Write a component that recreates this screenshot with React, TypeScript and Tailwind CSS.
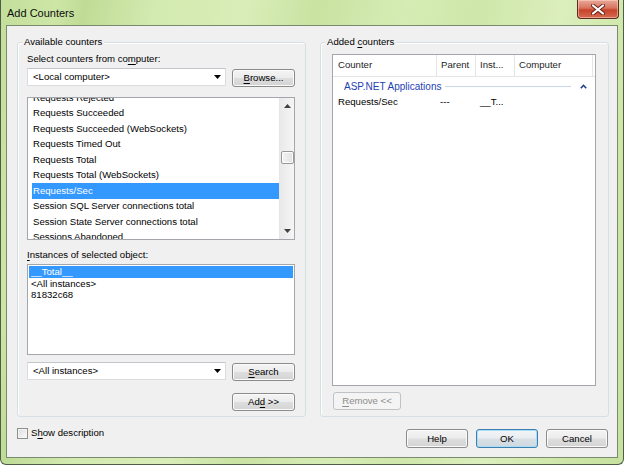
import React from "react";

const UI = "font-['Liberation_Sans',Arial,sans-serif] text-[9.6px] text-black";

function Btn({
  children,
  className = "",
  kind = "normal",
}: {
  children: React.ReactNode;
  className?: string;
  kind?: "normal" | "default" | "disabled";
}) {
  const look =
    kind === "default"
      ? "border-[#3c7fb1] bg-[linear-gradient(#f3f5f7,#e8edf1_48%,#d8e0e6_52%,#d0d9e0)] shadow-[inset_0_0_0_1px_#a9ddf7]"
      : kind === "disabled"
      ? "border-[#bfc3c6] bg-[#f4f4f4] text-[#8d8d8d]"
      : "border-[#8b8b8b] bg-[linear-gradient(#f4f4f4,#ececec_48%,#dedede_52%,#d3d3d3)] shadow-[inset_0_0_0_1px_#fbfbfb]";
  return (
    <div
      className={`flex shrink-0 items-center justify-center rounded-[3px] border leading-none ${look} ${className}`}
    >
      {children}
    </div>
  );
}

function DropArrow() {
  return (
    <svg width="7" height="4" viewBox="0 0 7 4" className="shrink-0">
      <path d="M0 0H7L3.5 4Z" fill="#000" />
    </svg>
  );
}

function Combo({ text, className = "" }: { text: string; className?: string }) {
  return (
    <div
      className={`flex h-[18px] items-center justify-between border border-[#dadde0] border-t-[#c3c6ca] bg-white pl-[5px] pr-[4px] ${className}`}
    >
      <span className="leading-none">{text}</span>
      <DropArrow />
    </div>
  );
}

function GroupBox({
  label,
  className = "",
  children,
}: {
  label: React.ReactNode;
  className?: string;
  children: React.ReactNode;
}) {
  return (
    <div
      className={`relative h-[375px] w-[289px] rounded-[3px] border border-[#d5dfe5] shadow-[inset_1px_1px_0_#ffffff] ${className}`}
    >
      <div className="absolute -top-[9px] left-[4px] bg-[#f0f0f0] px-[2px] leading-[16px]">
        {label}
      </div>
      {children}
    </div>
  );
}

function VScroll() {
  return (
    <div className="flex w-[15px] shrink-0 flex-col items-center border-l border-[#e6e6e6] bg-[linear-gradient(90deg,#e9e9e9,#f5f5f5)]">
      <div className="flex h-[16px] items-center justify-center">
        <svg width="7" height="4" viewBox="0 0 7 4">
          <path d="M3.5 0L7 4H0Z" fill="#404040" />
        </svg>
      </div>
      <div className="mt-[37px] h-[13px] w-[13px] rounded-[2px] border border-[#979797] bg-[linear-gradient(90deg,#f3f3f3,#e2e2e2)] shadow-[inset_0_0_0_1px_#fdfdfd]" />
      <div className="flex-1" />
      <div className="flex h-[16px] items-center justify-center">
        <svg width="7" height="4" viewBox="0 0 7 4">
          <path d="M0 0H7L3.5 4Z" fill="#404040" />
        </svg>
      </div>
    </div>
  );
}

const counters = [
  "Requests Rejected",
  "Requests Succeeded",
  "Requests Succeeded (WebSockets)",
  "Requests Timed Out",
  "Requests Total",
  "Requests Total (WebSockets)",
  "Requests/Sec",
  "Session SQL Server connections total",
  "Session State Server connections total",
  "Sessions Abandoned",
];

function CloseGlyph() {
  return (
    <svg width="14" height="11" viewBox="0 0 14 11">
      <path
        d="M2 1.5L12 9.5M12 1.5L2 9.5"
        stroke="#6a2418"
        strokeWidth="4"
        strokeLinecap="round"
      />
      <path
        d="M2 1.5L12 9.5M12 1.5L2 9.5"
        stroke="#ffffff"
        strokeWidth="2.2"
        strokeLinecap="round"
      />
    </svg>
  );
}

export default function App() {
  return (
    <div
      className={`${UI} flex h-[465px] w-[624px] flex-col overflow-hidden rounded-b-[6px] border-x border-b border-[#4f5d47] bg-[linear-gradient(100deg,#c3df9b_0%,#cde6a6_8%,#bfdc96_12%,#d3eab0_22%,#d9edb8_35%,#c9e3a2_45%,#d6ecb5_58%,#cfe7a9_68%,#dbeebd_80%,#cde6a7_92%,#c6e19f_100%)]`}
    >
      {/* title bar */}
      <div className="flex h-[25px] shrink-0 items-start justify-between">
        <div className="mt-[5px] pl-[6px] text-[11px] leading-[16px] text-[#0d0d0d]">
          Add Counters
        </div>
        <div className="mr-[4px] flex h-[19px] w-[42px] items-center justify-center rounded-b-[4px] border border-t-0 border-[#5b2c22] bg-[linear-gradient(#e9a99a,#d9735f_45%,#c7432b_55%,#d66b4f)] shadow-[inset_0_0_0_1px_rgba(255,220,200,0.5)]">
          <CloseGlyph />
        </div>
      </div>

      {/* client area */}
      <div className="ml-[5px] flex h-[433px] w-[612px] shrink-0 flex-col border border-[#7a8a6e] bg-[#f0f0f0]">
        <div className="mt-[16px] flex gap-[14px] pl-[10px]">
          {/* available counters */}
          <GroupBox label="Available counters">
            <div className="flex flex-col pl-[9px] pt-[8px]">
              <div className="leading-[16px]">
                Select counters from co<u className="underline-offset-2">m</u>puter:
              </div>
              <div className="mt-[1px] flex w-[268px] items-start gap-[6px]">
                <Combo text="<Local computer>" className="w-[199px]" />
                <Btn className="mt-[1px] h-[18px] w-[63px]">
                  <span>
                    <u className="underline-offset-2">B</u>rowse...
                  </span>
                </Btn>
              </div>
              <div className="mt-[10px] flex h-[143px] w-[268px] border border-[#a3a6aa] bg-white">
                <div className="flex-1 overflow-hidden pl-[4px]">
                  <div className="mt-[-8px] flex flex-col">
                    {counters.map((c) => (
                      <div
                        key={c}
                        className={`flex h-[15.5px] items-center whitespace-nowrap pl-[1px] ${
                          c === "Requests/Sec" ? "bg-[#3399ff] text-white" : ""
                        }`}
                      >
                        {c}
                      </div>
                    ))}
                  </div>
                </div>
                <VScroll />
              </div>
              <div className="mt-[7px] leading-[16px]">
                <u className="underline-offset-2">I</u>nstances of selected object:
              </div>
              <div className="mt-[1px] flex h-[91px] w-[268px] flex-col border border-[#a3a6aa] bg-white px-[1px] pt-[1px]">
                <div className="flex h-[12px] items-center bg-[#3399ff] pl-[2px] text-white">
                  __Total__
                </div>
                <div className="flex h-[12px] items-center pl-[2px]">&lt;All instances&gt;</div>
                <div className="flex h-[11px] items-center pl-[2px]">81832c68</div>
              </div>
              <div className="mt-[7px] flex w-[268px] items-start gap-[6px]">
                <Combo text="<All instances>" className="w-[199px]" />
                <Btn className="mt-[1px] h-[18px] w-[63px]">
                  <span>
                    <u className="underline-offset-2">S</u>earch
                  </span>
                </Btn>
              </div>
              <div className="mt-[12px] flex w-[268px] justify-end">
                <Btn className="h-[18px] w-[63px]">
                  <span>
                    Ad<u className="underline-offset-2">d</u> &gt;&gt;
                  </span>
                </Btn>
              </div>
            </div>
          </GroupBox>

          {/* added counters */}
          <GroupBox
            label={
              <span>
                Added <u className="underline-offset-2">c</u>ounters
              </span>
            }
          >
            <div className="flex flex-col pl-[11px] pt-[11px]">
              <div className="flex h-[332px] w-[264px] flex-col border border-[#a3a6aa] bg-white">
                <div className="flex h-[22px] shrink-0 border-b border-[#e5e5e5] text-[#1e1e1e]">
                  <div className="flex w-[104px] items-center border-r border-[#e5e5e5] pl-[5px]">
                    Counter
                  </div>
                  <div className="flex w-[39px] items-center border-r border-[#e5e5e5] pl-[4px]">
                    Parent
                  </div>
                  <div className="flex w-[39px] items-center border-r border-[#e5e5e5] pl-[4px]">
                    Inst...
                  </div>
                  <div className="flex w-[78px] items-center border-r border-[#e5e5e5] pl-[4px]">
                    Computer
                  </div>
                </div>
                <div className="mt-[1px] flex h-[16px] items-center pl-[11px] pr-[8px]">
                  <span className="whitespace-nowrap text-[10px] text-[#1e3fb4]">ASP.NET Applications</span>
                  <div className="ml-[4px] mr-[9px] h-px flex-1 bg-[#c9d5e9]" />
                  <svg width="7" height="5" viewBox="0 0 7 5">
                    <path d="M0.8 4.2L3.5 1.3L6.2 4.2" fill="none" stroke="#1e3a8a" strokeWidth="1.6" />
                  </svg>
                </div>
                <div className="flex h-[17px] items-center">
                  <div className="w-[104px] pl-[5px]">Requests/Sec</div>
                  <div className="w-[39px] pl-[3px]">---</div>
                  <div className="w-[39px] pl-[4px]">__T...</div>
                </div>
              </div>
              <Btn kind="disabled" className="ml-[1px] mt-[6px] h-[18px] w-[68px]">
                <span>
                  <u className="underline-offset-2">R</u>emove &lt;&lt;
                </span>
              </Btn>
            </div>
          </GroupBox>
        </div>

        {/* bottom row */}
        <div className="mt-[10px] flex items-start justify-between pl-[10px] pr-[9px]">
          <div className="flex items-center gap-[3px]">
            <div className="h-[11px] w-[11px] border border-[#8f8f8f] bg-[linear-gradient(135deg,#dcdcdc,#fbfbfb)] shadow-[inset_0_0_0_1px_#f4f4f4]" />
            <span className="leading-[12px]">
              S<u className="underline-offset-2">h</u>ow description
            </span>
          </div>
          <div className="mt-[2px] flex gap-[8px]">
            <Btn className="h-[19px] w-[62px]">Help</Btn>
            <Btn kind="default" className="h-[19px] w-[62px]">OK</Btn>
            <Btn className="h-[19px] w-[62px]">Cancel</Btn>
          </div>
        </div>
      </div>
    </div>
  );
}
